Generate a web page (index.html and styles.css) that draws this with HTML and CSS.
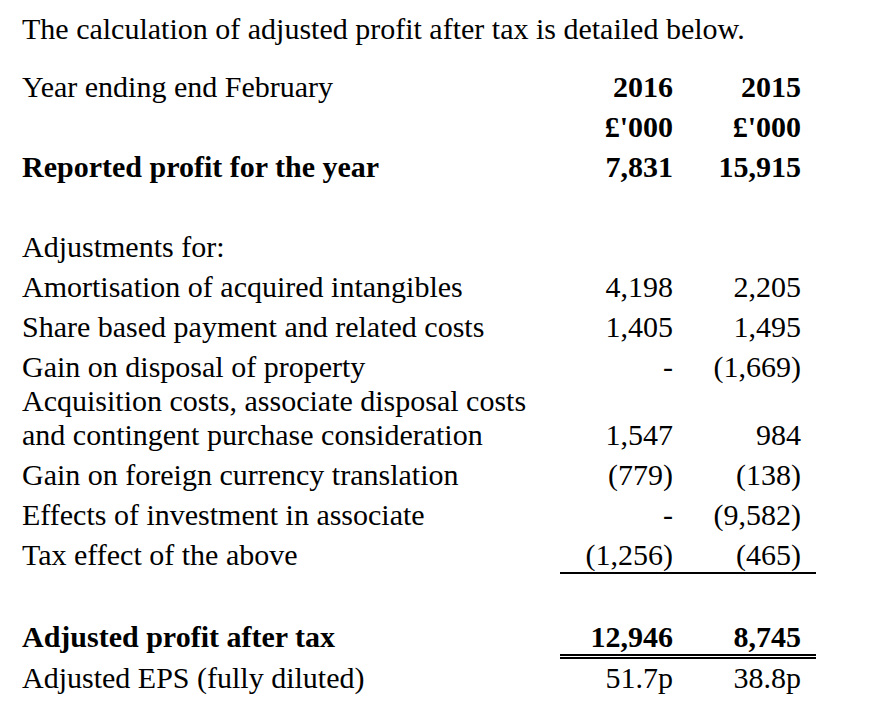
FILE: index.html
```html
<!DOCTYPE html>
<html lang="en">
<head>
<meta charset="utf-8">
<title>Adjusted profit after tax</title>
<link rel="stylesheet" href="styles.css">
</head>
<body>
<p class="intro">The calculation of adjusted profit after tax is detailed below.</p>
<table class="fin">
  <colgroup>
    <col class="c-label">
    <col class="c-num">
    <col class="c-num">
  </colgroup>
  <tbody>
    <tr>
      <td class="label">Year ending end February</td>
      <td class="num bold">2016</td>
      <td class="num bold">2015</td>
    </tr>
    <tr>
      <td class="label"></td>
      <td class="num bold">£'000</td>
      <td class="num bold">£'000</td>
    </tr>
    <tr>
      <td class="label bold">Reported profit for the year</td>
      <td class="num bold">7,831</td>
      <td class="num bold">15,915</td>
    </tr>
    <tr class="blank"><td></td><td></td><td></td></tr>
    <tr>
      <td class="label">Adjustments for:</td>
      <td class="num"></td>
      <td class="num"></td>
    </tr>
    <tr>
      <td class="label">Amortisation of acquired intangibles</td>
      <td class="num">4,198</td>
      <td class="num">2,205</td>
    </tr>
    <tr>
      <td class="label">Share based payment and related costs</td>
      <td class="num">1,405</td>
      <td class="num">1,495</td>
    </tr>
    <tr>
      <td class="label">Gain on disposal of property</td>
      <td class="num">-</td>
      <td class="num">(1,669)</td>
    </tr>
    <tr class="tight">
      <td class="label">Acquisition costs, associate disposal costs and contingent purchase consideration</td>
      <td class="num">1,547</td>
      <td class="num">984</td>
    </tr>
    <tr>
      <td class="label">Gain on foreign currency translation</td>
      <td class="num">(779)</td>
      <td class="num">(138)</td>
    </tr>
    <tr>
      <td class="label">Effects of investment in associate</td>
      <td class="num">-</td>
      <td class="num">(9,582)</td>
    </tr>
    <tr class="subtotal">
      <td class="label">Tax effect of the above</td>
      <td class="num">(1,256)</td>
      <td class="num">(465)</td>
    </tr>
    <tr class="blank"><td></td><td></td><td></td></tr>
    <tr class="total">
      <td class="label bold">Adjusted profit after tax</td>
      <td class="num bold">12,946</td>
      <td class="num bold">8,745</td>
    </tr>
    <tr class="eps">
      <td class="label">Adjusted EPS (fully diluted)</td>
      <td class="num">51.7p</td>
      <td class="num">38.8p</td>
    </tr>
  </tbody>
</table>
</body>
</html>
```
FILE: styles.css
```css
html, body {
  margin: 0;
  padding: 0;
  background: #fff;
}

body {
  font-family: "Liberation Serif", "Times New Roman", serif;
  font-size: 30px;
  color: #000;
}

.intro {
  margin: 0 0 18px 0;
  padding: 12px 0 0 22px;
  line-height: 34px;
}

.fin {
  margin-left: 22px;
  width: 794px;
  table-layout: fixed;
  border-collapse: separate;
  border-spacing: 0;
}

.c-label { width: 538px; }
.c-num { width: 128px; }

.fin td {
  padding: 6px 0 0 0;
  line-height: 34px;
}

.fin .label {
  text-align: left;
  vertical-align: top;
}

.fin .num {
  text-align: right;
  vertical-align: bottom;
  padding-right: 15px;
}

.bold {
  font-weight: bold;
}

.fin .blank td {
  height: 40px;
  padding: 0;
}

.fin .tight td {
  padding-top: 0;
}

.fin .subtotal .num {
  border-bottom: 2px solid #000;
}

.fin .total .num {
  border-bottom: 5px double #000;
}

.fin .eps td {
  padding-top: 2px;
}
```
